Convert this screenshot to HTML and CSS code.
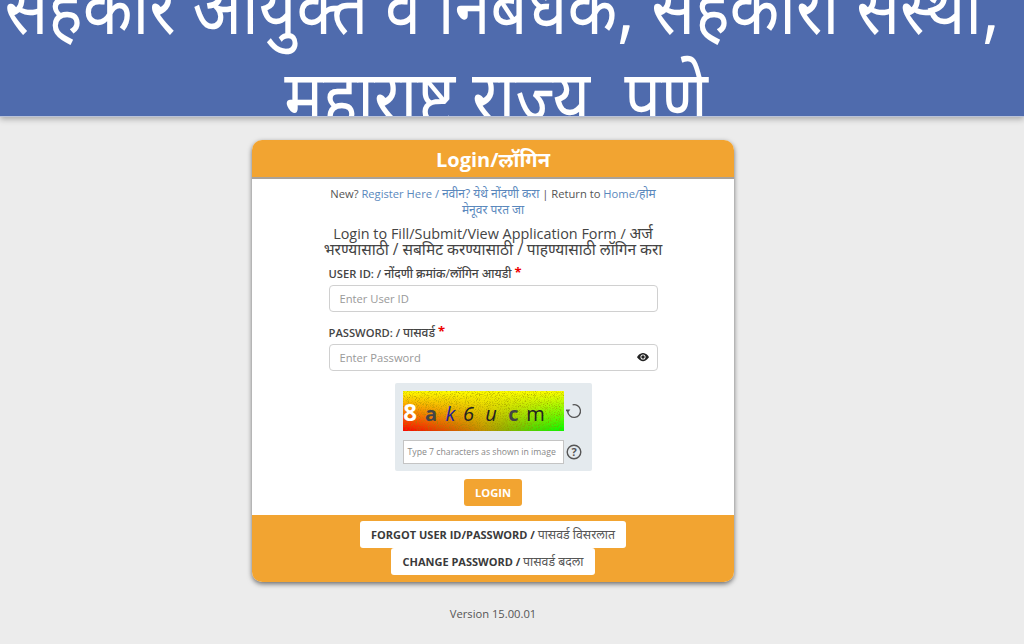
FILE: index.html
```html
<!DOCTYPE html>
<html lang="mr">
<head>
<meta charset="utf-8">
<title>Login</title>
<link rel="stylesheet" href="styles.css">
</head>
<body>
<header class="banner">
  <h1 class="banner-title"><span class="banner-line">सहकार आयुक्त व निबंधक, सहकारी संस्था,</span><span class="banner-line">महाराष्ट्र राज्य, पुणे</span></h1>
</header>
<main class="page">
  <section class="card">
    <h2 class="card-head">Login/लॉगिन</h2>
    <div class="card-body">
      <p class="links">New? <a href="#">Register Here / <span class="dv">नवीन? येथे नोंदणी करा</span></a> | Return to <a href="#">Home/<span class="dv">होम मेनूवर परत जा</span></a></p>
      <p class="intro">Login to Fill/Submit/View Application Form / <span class="dv">अर्ज भरण्यासाठी / सबमिट करण्यासाठी / पाहण्यासाठी लॉगिन करा</span></p>
      <div class="field">
        <label class="label">USER ID: / <span class="dv">नोंदणी क्रमांक/लॉगिन आयडी</span> <span class="req">*</span></label>
        <div class="input">Enter User ID</div>
      </div>
      <div class="field">
        <label class="label">PASSWORD: / <span class="dv">पासवर्ड</span> <span class="req">*</span></label>
        <div class="input">Enter Password
          <svg class="eye" viewBox="0 0 16 16" width="12" height="12"><path d="M16 8s-3-5.5-8-5.5S0 8 0 8s3 5.5 8 5.5S16 8 16 8z" fill="#222"/><circle cx="8" cy="8" r="3.4" fill="#fff"/><circle cx="8" cy="8" r="2.3" fill="#222"/></svg>
        </div>
      </div>
      <div class="captcha">
        <div class="captcha-row">
          <div class="captcha-img">
            <svg class="noise" width="161" height="40"><filter id="n"><feTurbulence type="fractalNoise" baseFrequency="1.1" numOctaves="2" seed="4"/><feColorMatrix values="0 0 0 0 0.3  0 0 0 0 0.25  0 0 0 0 0  0 0 0 1.8 -0.85"/></filter><rect width="161" height="40" filter="url(#n)"/></svg>
            <span class="c c1">8</span><span class="c c2">a</span><span class="c c3">k</span><span class="c c4">6</span><span class="c c5">u</span><span class="c c6">c</span><span class="c c7">m</span>
          </div>
          <svg class="tool" viewBox="0 0 16 16" width="16" height="16"><path d="M6.6 1.8A6.4 6.4 0 1 1 1.7 8.6" fill="none" stroke="#555" stroke-width="1.3"/><path d="M-0.8 6.4 L4.4 6.4 L1.8 9.8 Z" fill="#555"/></svg>
        </div>
        <div class="captcha-row">
          <div class="captcha-input">Type 7 characters as shown in image</div>
          <svg class="tool" viewBox="0 0 16 16" width="16" height="16"><circle cx="8" cy="8" r="6.8" fill="none" stroke="#555" stroke-width="1.4"/><text x="8" y="11.8" text-anchor="middle" class="q">?</text></svg>
        </div>
      </div>
      <button class="login" type="button">LOGIN</button>
    </div>
    <div class="card-foot">
      <a class="pill" href="#"><b>FORGOT USER ID/PASSWORD /</b> <span class="dv">पासवर्ड विसरलात</span></a>
      <a class="pill" href="#"><b>CHANGE PASSWORD /</b> <span class="dv">पासवर्ड बदला</span></a>
    </div>
  </section>
  <p class="version">Version 15.00.01</p>
</main>
</body>
</html>
```
FILE: styles.css
```css
* { box-sizing: border-box; }
html, body { margin: 0; height: 100%; }
body {
  background: #ececec;
  color: #444;
  font-family: "Open Sans", "Noto Sans", sans-serif;
  font-size: 11.2px;
  overflow: hidden;
}
.banner {
  height: 117px;
  background: #4f6bad;
  overflow: hidden;
  box-shadow: 0 2px 6px rgba(0,0,0,.3);
  border-bottom: 1px solid #b9c2d8;
}
.banner-title {
  margin: -40px 0 0;
  padding-right: 20px;
  color: #fff;
  font-family: "Noto Sans", sans-serif;
  font-weight: 400;
  font-size: 64.8px;
  line-height: 77px;
  text-align: center;
  white-space: nowrap;
  transform: scaleY(1.18);
  transform-origin: top;
  filter: blur(.6px);
}
.banner-line { display: block; }
.banner-line + .banner-line { padding-right: 12px; }
.page { display: flex; flex-direction: column; align-items: center; padding-right: 38px; }
.card {
  width: 482px;
  margin-top: 23px;
  border-radius: 10px;
  overflow: hidden;
  background: #fff;
  box-shadow: 0 2px 5px rgba(0,0,0,.55);
}
.card-head {
  margin: 0;
  height: 39px;
  background: #f2a431;
  border-bottom: 2px solid #a9a29a;
  color: #fff;
  font-size: 20px;
  font-weight: 700;
  line-height: 40px;
  text-align: center;
}
.card-body {
  display: flex;
  flex-direction: column;
  align-items: center;
  padding: 7px 76px 8px;
  height: 336px;
}
.links { margin: 0; width: 340px; line-height: 16px; text-align: center; color: #555; }
.links .dv { font-size: 12px; }
.links a { color: #5a88bd; text-decoration: none; }
.intro { margin: 8px 0 0; width: 345px; font-size: 14.4px; line-height: 15.5px; text-align: center; }
.intro .dv { font-size: 15.5px; }
.field { width: 329px; margin-top: 7px; }
.field + .field { margin-top: 11px; }
.label { display: block; font-weight: 600; line-height: 17px; margin-bottom: 3px; color: #444; }
.label .dv { font-size: 12px; font-weight: 500; }
.req { color: #e00; font-weight: 700; font-size: 13px; vertical-align: 1px; }
.input {
  position: relative;
  height: 27px;
  padding-left: 10px;
  background: #fff;
  border: 1px solid #d0d0d0;
  border-radius: 4px;
  color: #999;
  line-height: 25px;
}
.eye { position: absolute; right: 8px; top: 6px; }
.captcha {
  width: 197px;
  height: 88px;
  margin-top: 12px;
  padding: 8px;
  background: #e4eaee;
  border-radius: 2px;
  display: flex;
  flex-direction: column;
  gap: 9px;
}
.captcha-row { display: flex; align-items: center; gap: 1px; }
.captcha-img {
  position: relative;
  display: flex;
  align-items: baseline;
  flex: none;
  width: 161px;
  height: 40px;
  padding-top: 1px;
  background:
    linear-gradient(to bottom, #ff0, rgba(255,255,0,0)),
    linear-gradient(to right, #f00, #c09000 50%, #0f0);
  overflow: hidden;
  font-size: 20px;
}
.noise { position: absolute; left: 0; top: 0; }
.c { position: relative; flex: none; display: block; text-align: center; line-height: 40px; color: #222; }
.c1 { width: 15px; font-size: 24px; font-weight: 700; color: #fff; }
.c2 { width: 27px; font-weight: 700; color: #444; }
.c3 { width: 12px; font-style: italic; color: #22229a; }
.c4 { width: 24px; font-style: italic; }
.c5 { width: 21px; font-style: italic; }
.c6 { width: 24px; font-weight: 700; color: #444; }
.c7 { width: 20px; }
.tool { flex: none; margin-left: 1px; }
.q { font: 700 11px "Open Sans", sans-serif; fill: #555; }
.captcha-input {
  flex: none;
  width: 161px;
  height: 24px;
  padding-left: 4px;
  background: #fff;
  border: 1px solid #c4c4c4;
  color: #888;
  font-size: 8.7px;
  line-height: 22px;
  white-space: nowrap;
  overflow: hidden;
}
.login {
  width: 58px;
  height: 27px;
  margin-top: 8px;
  padding: 0;
  border: 0;
  border-radius: 3px;
  background: #f2a431;
  color: #fff;
  font: 700 11.2px "Open Sans", sans-serif;
}
.card-foot {
  height: 67px;
  padding-top: 6px;
  background: #f2a431;
  display: flex;
  flex-direction: column;
  align-items: center;
}
.pill {
  display: block;
  height: 27px;
  padding: 0 11px;
  background: #fff;
  border-radius: 3px;
  color: #3a3a3a;
  font-size: 11px;
  line-height: 27px;
  text-decoration: none;
  white-space: nowrap;
}
.pill .dv { font-size: 12.3px; color: #555; }
.version { margin: 24px 0 0; color: #555; text-align: center; }
```
